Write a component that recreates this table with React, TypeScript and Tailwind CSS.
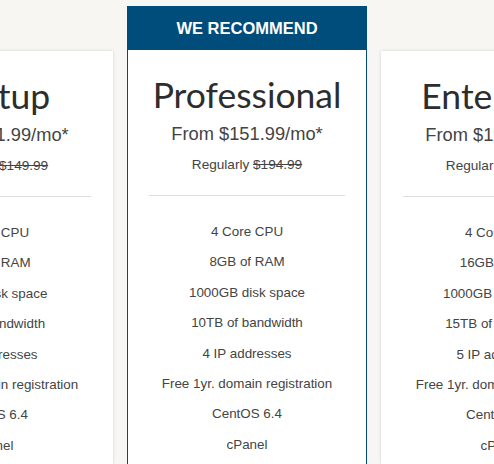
const plans = [
  {
    name: 'Startup',
    price: '$101.99',
    regular: '$149.99',
    features: ['2 Core CPU', '4GB of RAM', '500GB disk space', '5TB of bandwidth', '3 IP addresses', 'Free 1yr. domain registration', 'CentOS 6.4', 'cPanel'],
  },
  {
    name: 'Professional',
    price: '$151.99',
    regular: '$194.99',
    recommended: true,
    features: ['4 Core CPU', '8GB of RAM', '1000GB disk space', '10TB of bandwidth', '4 IP addresses', 'Free 1yr. domain registration', 'CentOS 6.4', 'cPanel'],
  },
  {
    name: 'Enterprise',
    price: '$199.99',
    regular: '$249.99',
    features: ['4 Core CPU', '16GB of RAM', '1000GB disk space', '15TB of bandwidth', '5 IP addresses', 'Free 1yr. domain registration', 'CentOS 6.4', 'cPanel'],
  },
];

type Plan = (typeof plans)[number] & { recommended?: boolean };

function PlanCard({ plan }: { plan: Plan }) {
  const body = (
    <div className="flex flex-col items-center">
      <h2 className="mt-[23px] text-[35.5px] leading-[44px] font-normal text-[#2d2d2d]" style={{ fontFamily: 'Lato, sans-serif' }}>
        {plan.name}
      </h2>
      <div className="mt-[6px] text-[18.3px] leading-[22px] text-[#444]">From {plan.price}/mo*</div>
      <div className="mt-[11px] text-[13.6px] leading-[18px] text-[#444]">
        Regularly <span className="line-through">{plan.regular}</span>
      </div>
      <div className="mt-[21px] h-px w-[196px] bg-[#ddd]" />
      <ul className="mt-[29px] flex flex-col items-center text-[13.4px] text-[#444]">
        {plan.features.map(f => (
          <li key={f} className="h-[30.4px] leading-[14px]">{f}</li>
        ))}
      </ul>
    </div>
  );

  if (plan.recommended) {
    return (
      <div className="mt-[6px] flex w-[240px] shrink-0 flex-col border-x border-[#004d7c] bg-white">
        <div className="flex h-[44px] shrink-0 items-center justify-center bg-[#004d7c] text-[16.5px] font-bold text-white">
          WE RECOMMEND
        </div>
        <div>{body}</div>
      </div>
    );
  }

  return (
    <div className="mt-[51px] w-[240px] shrink-0 bg-white shadow-[0_0_3px_rgba(0,0,0,0.15)]">
      {body}
    </div>
  );
}

export default function App() {
  return (
    <div
      className="flex h-[464px] w-[494px] justify-center gap-[14px] overflow-hidden bg-[#f7f6f2]"
      style={{ fontFamily: '"Liberation Sans", Arial, sans-serif' }}
    >
      {plans.map(p => (
        <PlanCard key={p.name} plan={p} />
      ))}
    </div>
  );
}
